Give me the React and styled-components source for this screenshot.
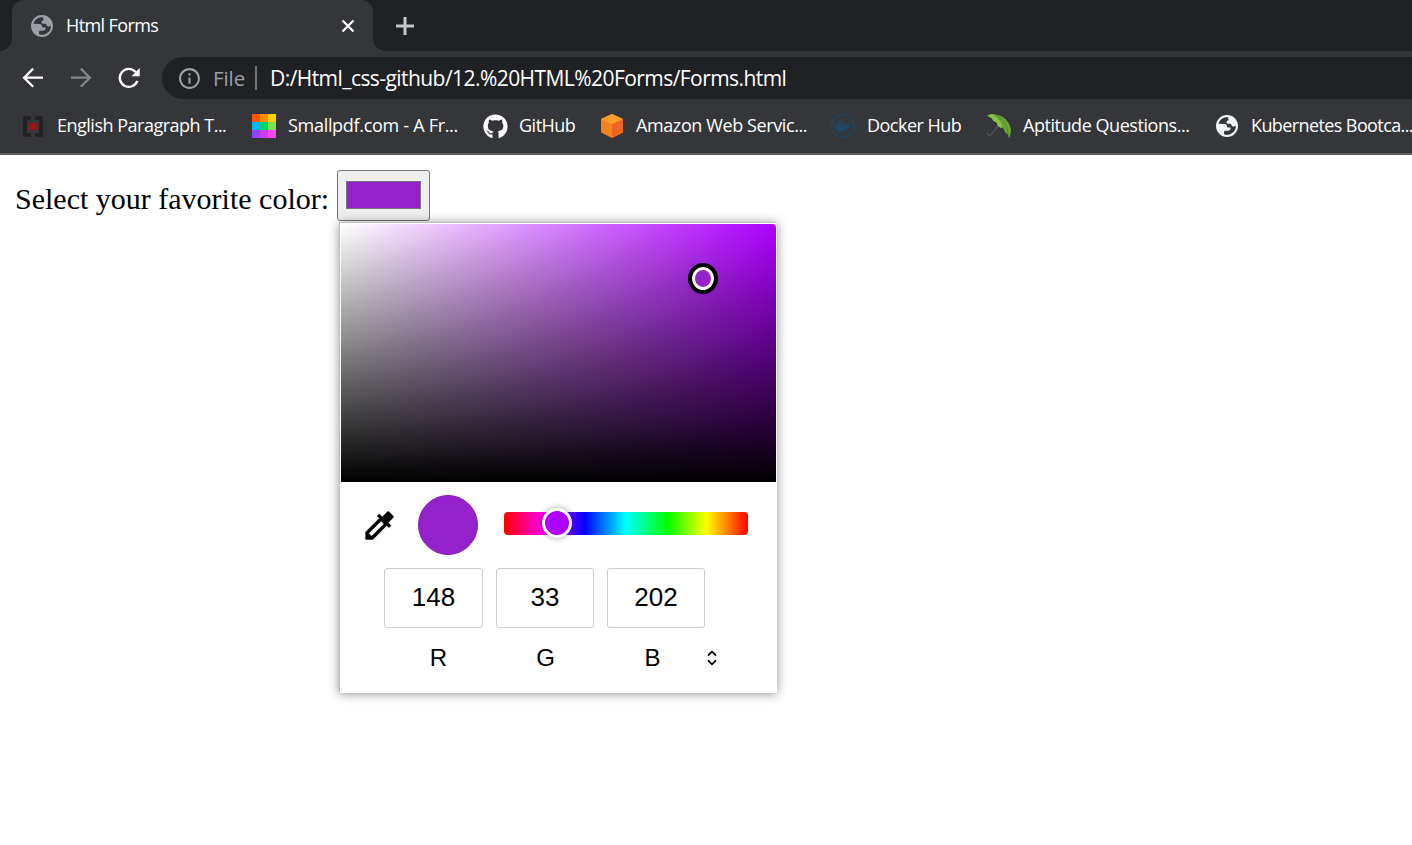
import React from "react";
import styled, { createGlobalStyle } from "styled-components";
import { FaGithub } from "react-icons/fa";
import { MdInfoOutline } from "react-icons/md";

const GlobalStyle = createGlobalStyle`
  *, *::before, *::after { box-sizing: border-box; }
  html, body { margin: 0; padding: 0; overflow: hidden; background: #fff; }
`;

const Browser = styled.div`
  width: 1412px;
  height: 845px;
  display: flex;
  flex-direction: column;
  overflow: hidden;
  background: #fff;
  font-family: "Open Sans", "Noto Sans", sans-serif;
`;

const TabStrip = styled.div`
  height: 51px;
  flex: none;
  display: flex;
  padding-left: 12px;
  background: #202124;
`;

const Tab = styled.div`
  position: relative;
  width: 361px;
  height: 51px;
  display: flex;
  align-items: center;
  padding: 0 15px 0 18px;
  border-radius: 12px 12px 0 0;
  background: #35363a;

  &::before, &::after {
    content: "";
    position: absolute;
    bottom: 0;
    width: 12px;
    height: 12px;
  }
  &::before {
    left: -12px;
    background: radial-gradient(circle at 0 0, #202124 11.5px, #35363a 12px);
  }
  &::after {
    right: -12px;
    background: radial-gradient(circle at 100% 0, #202124 11.5px, #35363a 12px);
  }
`;

const Label = styled.span`
  font-size: ${(p) => p.$size || 18}px;
  line-height: 26px;
  padding-bottom: 1px;
  letter-spacing: ${(p) => p.$spacing || 0}px;
  color: ${(p) => p.$color || "#fff"};
  white-space: nowrap;
`;

const TabTitle = styled(Label)`
  flex: 1;
  margin-left: 12px;
`;

const BookmarkTitle = styled(Label)`
  padding-bottom: 2px;
`;

const NewTab = styled.div`
  display: flex;
  align-items: center;
  margin-left: 22px;
`;

const Toolbar = styled.div`
  height: 54px;
  flex: none;
  display: flex;
  align-items: center;
  padding-left: 19px;
  background: #35363a;
`;

const NavIcon = styled.div`
  width: 28px;
  height: 28px;
  margin-right: 20px;
  display: flex;
  color: ${(p) => (p.$dim ? "#85868a" : "#fff")};
`;

const AddressBar = styled.div`
  flex: 1;
  height: 42px;
  margin-left: -1px;
  display: flex;
  align-items: center;
  padding-left: 15px;
  border-radius: 21px 0 0 21px;
  background: #202124;
  color: #9aa0a6;
`;

const Scheme = styled(Label)`
  margin-left: 11px;
  width: 32px;
`;

const Separator = styled.div`
  width: 2px;
  height: 24px;
  margin: 0 13px 0 10px;
  background: #73757a;
`;

const BookmarkBar = styled.div`
  height: 50px;
  flex: none;
  display: flex;
  padding: 7px 0 0 20px;
  background: #35363a;
  border-bottom: 2px solid #5f6063;
`;

const Bookmark = styled.div`
  width: ${(p) => p.$width}px;
  height: 28px;
  flex: none;
  display: flex;
  align-items: center;
  gap: 11px;
`;

const BookmarkIcon = styled.div`
  width: 26px;
  height: 28px;
  flex: none;
  display: flex;
  align-items: center;
  justify-content: center;
  color: #fff;
`;

const Page = styled.main`
  flex: 1;
  padding: 15px 0 0 15px;
`;

const FormRow = styled.div`
  display: flex;
  align-items: flex-start;
`;

const Question = styled.label`
  width: 322px;
  padding-top: 12px;
  font-family: "Liberation Serif", serif;
  font-size: 30px;
  line-height: 34px;
  white-space: nowrap;
  color: #000;
`;

const ColorField = styled.div`
  position: relative;
`;

const ColorButton = styled.div`
  width: 93px;
  height: 51px;
  padding: 10px 8px 11px;
  border: 1px solid #767676;
  border-radius: 3px;
  background: #efefef;
`;

const Swatch = styled.div`
  width: 75px;
  height: 28px;
  border: 1px solid #777;
  background: #9421ca;
`;

const Popup = styled.div`
  position: absolute;
  left: 2px;
  top: 52px;
  width: 438px;
  height: 471px;
  border: 1px solid #c0c0c0;
  border-right-color: #fff;
  border-bottom-color: #fff;
  background: #fff;
  box-shadow: 0 1px 10px rgba(0, 0, 0, 0.42);
`;

const Spectrum = styled.div`
  position: relative;
  width: 435px;
  height: 258px;
  margin: 1px 0 0 1px;
  border-radius: 0 4px 0 0;
  background: linear-gradient(to top, #000, rgba(0, 0, 0, 0)), linear-gradient(to right, #fff, #ae00ff);
`;

const SpectrumHandle = styled.div`
  position: absolute;
  left: 347px;
  top: 39px;
  width: 30px;
  height: 31px;
  border: 4px solid #000;
  border-radius: 50%;
  background: #9421ca;
  box-shadow: inset 0 0 0 3px #fff;
`;

const Controls = styled.div`
  height: 86px;
  display: flex;
  align-items: center;
  padding-left: 21px;
`;

const Preview = styled.div`
  width: 60px;
  height: 60px;
  margin: 0 26px 0 20px;
  border: 1px solid #7d1fae;
  border-radius: 50%;
  background: #9421ca;
`;

const HueSlider = styled.div`
  position: relative;
  margin-bottom: 3px;
  width: 244px;
  height: 23px;
  border-radius: 4px;
  background: linear-gradient(to right, #f00 0%, #f0f 17%, #00f 33%, #0ff 50%, #0f0 67%, #ff0 83%, #f00 100%);
`;

const HueHandle = styled.div`
  position: absolute;
  left: 38px;
  top: -4px;
  width: 30px;
  height: 30px;
  border: 3px solid #fff;
  border-radius: 50%;
  background: #ae00ff;
  box-shadow: 0 0 6px rgba(0, 0, 0, 0.35);
`;

const Channels = styled.div`
  display: flex;
  gap: 13px;
  padding-left: 44px;
`;

const ChannelValue = styled.div`
  width: ${(p) => p.$width}px;
  height: 60px;
  border: 1px solid #ccc;
  border-radius: 3px;
  font: 26px/56px "Liberation Sans", sans-serif;
  text-align: center;
  color: #000;
`;

const ChannelNames = styled.div`
  display: flex;
  align-items: center;
  height: 60px;
  padding-left: 45px;
`;

const ChannelName = styled.div`
  width: 107px;
  font: 24px/60px "Liberation Sans", sans-serif;
  text-align: center;
  color: #000;
`;

const Globe = ({ color }) => (
  <svg width="24" height="24" viewBox="0 0 24 24">
    <circle cx="12" cy="12" r="11" fill={color} />
    <path
      d="M13 3.2C8.4 2.8 4.6 5.4 3.6 9.8L9.6 9.9C11.3 10.1 12 11 12 12.2C12 13.3 12.8 13.6 13.6 13.6H15.6C16 15.4 15 16.7 13.4 16.7H9.6L8.8 18.6L9.4 20.4C13.9 21.6 18.4 19.3 20.2 15.4C20.8 14 21 12.5 20.8 11.5C20.2 12.5 19.2 12.8 18 12.6C16.4 12.3 16.7 10 15.4 9.7H12.5C11.3 9.3 11 7.8 12 7.1L13.6 6.2Z"
      fill="#35363a"
    />
  </svg>
);

const BackArrow = () => (
  <svg width="28" height="28" viewBox="0 0 28 28" fill="none" stroke="currentColor" strokeWidth="2.3">
    <path d="M24 13.7H5.5M14.2 4.6L5.1 13.7L14.2 22.8" />
  </svg>
);

const ForwardArrow = () => (
  <svg width="28" height="28" viewBox="0 0 28 28" fill="none" stroke="currentColor" strokeWidth="2.3">
    <path d="M4 13.7H22.5M13.8 4.6L22.9 13.7L13.8 22.8" />
  </svg>
);

const ReloadIcon = () => (
  <svg width="28" height="28" viewBox="0 0 28 28">
    <path d="M22.3 16.8A9 9 0 1 1 20.6 8" fill="none" stroke="currentColor" strokeWidth="2.3" />
    <path d="M24.7 4V12.2H16.5Z" fill="currentColor" />
  </svg>
);

const CloseIcon = () => (
  <svg width="20" height="20" viewBox="0 0 20 20">
    <path d="M4.5 4.5L15.5 15.5M15.5 4.5L4.5 15.5" stroke="#fff" strokeWidth="2.2" />
  </svg>
);

const PlusIcon = () => (
  <svg width="20" height="20" viewBox="0 0 20 20">
    <path d="M1 10H19M10 1V19" stroke="#c4c6ca" strokeWidth="3" />
  </svg>
);

const UpDownIcon = () => (
  <svg width="12" height="18" viewBox="0 0 12 18">
    <path d="M2 6.6L6 2.6L10 6.6M2 11.4L6 15.4L10 11.4" fill="none" stroke="#000" strokeWidth="1.7" />
  </svg>
);

const EyedropperIcon = () => (
  <svg width="37" height="37" viewBox="0 0 24 24">
    <path d="M20.71 5.63l-2.34-2.34c-.39-.39-1.02-.39-1.41 0l-3.12 3.12-1.93-1.91-1.41 1.41 1.42 1.42L3 16.25V21h4.75l8.92-8.92 1.42 1.42 1.41-1.41-1.92-1.92 3.12-3.12c.4-.4.4-1.03.01-1.42zM6.92 19L5 17.08l8.06-8.06 1.92 1.92L6.92 19z" fill="#000" stroke="#000" strokeWidth="0.3" />
  </svg>
);

const BracketIcon = () => (
  <svg width="20" height="21" viewBox="0 0 20 21">
    <path d="M8 2H2V19H8M12 2H18V19H12" fill="none" stroke="#232023" strokeWidth="3.6" />
    <rect x="6" y="7" width="8" height="7" fill="#98151e" />
  </svg>
);

const tiles = ["#ff5500", "#ff8c00", "#ffd000", "#00b9ff", "#00d563", "#7be250", "#8f45ff", "#cb3df5", "#ff45f3"];

const TilesIcon = () => (
  <svg width="24" height="24" viewBox="0 0 24 24" shapeRendering="crispEdges">
    {tiles.map((fill, i) => (
      <rect key={fill} x={(i % 3) * 8} y={Math.floor(i / 3) * 8} width="8" height="8" fill={fill} />
    ))}
  </svg>
);

const CubeIcon = () => (
  <svg width="24" height="24" viewBox="0 0 24 24">
    <path d="M12 0L23 5V18.5L12 24L1 18.5V5Z" fill="#f58220" />
    <path d="M12 0L23 5L12 10.5L1 5Z" fill="#fc9c2c" />
    <path d="M12 10.5L23 5V18.5L12 24Z" fill="#ee6422" />
  </svg>
);

const DockerIcon = () => (
  <svg width="24" height="24" viewBox="0 0 24 24" fill="#1e4862">
    <circle cx="12" cy="12" r="11.3" fill="none" stroke="#1e4862" strokeWidth="1.2" />
    <path d="M3.6 12H16C16.4 10.8 16.2 9.6 16.8 8.6C17.8 9.2 18.2 10 18.3 10.8C19.3 10.5 20.4 10.7 21 11.1C20.4 12.4 19.3 12.8 18 12.8C16.5 16.2 13.5 17.8 9.6 17.8C5.6 17.8 3.4 15.8 3.6 12Z" />
    <path d="M4.6 9.4H6.6V11.4H4.6ZM7.2 9.4H9.2V11.4H7.2ZM9.8 9.4H11.8V11.4H9.8ZM12.4 9.4H14.4V11.4H12.4ZM7.2 7H9.2V9H7.2ZM9.8 7H11.8V9H9.8ZM9.8 4.8H11.8V6.6H9.8Z" />
  </svg>
);

const UmbrellaIcon = () => (
  <svg width="26" height="26" viewBox="0 0 26 26">
    <path d="M14 11L5.5 21C3.8 23.2 1 22.4 1.4 19.6" fill="none" stroke="#55585a" strokeWidth="1.1" />
    <path
      d="M1 2.4C3.5.4 8.5.3 14 2.6C20.5 5.6 24.8 11.5 25 18L23.6 25C22.6 24.2 22.2 23 22 21.4C20.6 20.6 19.4 19.8 18.6 18.2C18.3 16.7 17.6 15.2 16.2 14.6C14.3 14.8 12.7 14 11.6 12.8C11.2 10.7 10.8 9.4 9.2 8.6C7.6 8.2 6.6 7 5.8 5.2C4.2 4.6 2.4 3.8 1 2.4Z"
      fill="#6ca534"
    />
    <path d="M6 1.6C10.5 3.2 15 8 16.2 14.6C14.3 14.8 12.7 14 11.6 12.8C11.2 10.7 10.8 9.4 9.2 8.6C7.6 8.2 6.6 7 5.8 5.2L2.8 3C4 2.2 5 1.8 6 1.6Z" fill="#8abf55" />
    <path d="M9 1.8C16 4.2 21.4 11.5 22 21.4" fill="none" stroke="#4a8422" strokeWidth="0.9" />
  </svg>
);

const bookmarks = [
  { title: "English Paragraph T...", width: 231, icon: <BracketIcon />, spacing: -0.5 },
  { title: "Smallpdf.com - A Fr...", width: 231, icon: <TilesIcon />, spacing: -0.3 },
  { title: "GitHub", width: 117, icon: <FaGithub size={25} />, spacing: -0.5 },
  { title: "Amazon Web Servic...", width: 231, icon: <CubeIcon />, spacing: -0.4 },
  { title: "Docker Hub", width: 156, icon: <DockerIcon />, spacing: -0.52 },
  { title: "Aptitude Questions...", width: 228, icon: <UmbrellaIcon />, spacing: -0.45 },
  { title: "Kubernetes Bootca...", width: 198, icon: <Globe color="#f1f3f4" />, spacing: -0.6 },
];

const channels = [
  { name: "R", value: 148, width: 99 },
  { name: "G", value: 33, width: 98 },
  { name: "B", value: 202, width: 98 },
];

export default function App() {
  return (
    <Browser>
      <GlobalStyle />
      <TabStrip>
        <Tab>
          <Globe color="#9aa0a6" />
          <TabTitle $spacing={-0.6}>Html Forms</TabTitle>
          <CloseIcon />
        </Tab>
        <NewTab><PlusIcon /></NewTab>
      </TabStrip>
      <Toolbar>
        <NavIcon><BackArrow /></NavIcon>
        <NavIcon $dim><ForwardArrow /></NavIcon>
        <NavIcon><ReloadIcon /></NavIcon>
        <AddressBar>
          <MdInfoOutline size={25} />
          <Scheme $size={20.5} $spacing={-0.1} $color="#9aa0a6">File</Scheme>
          <Separator />
          <Label $size={21} $spacing={-0.56}>D:/Html_css-github/12.%20HTML%20Forms/Forms.html</Label>
        </AddressBar>
      </Toolbar>
      <BookmarkBar>
        {bookmarks.map((b) => (
          <Bookmark key={b.title} $width={b.width}>
            <BookmarkIcon>{b.icon}</BookmarkIcon>
            <BookmarkTitle $spacing={b.spacing}>{b.title}</BookmarkTitle>
          </Bookmark>
        ))}
      </BookmarkBar>
      <Page>
        <FormRow>
          <Question>Select your favorite color:</Question>
          <ColorField>
            <ColorButton><Swatch /></ColorButton>
            <Popup>
              <Spectrum><SpectrumHandle /></Spectrum>
              <Controls>
                <EyedropperIcon />
                <Preview />
                <HueSlider><HueHandle /></HueSlider>
              </Controls>
              <Channels>
                {channels.map((c) => <ChannelValue key={c.name} $width={c.width}>{c.value}</ChannelValue>)}
              </Channels>
              <ChannelNames>
                {channels.map((c) => <ChannelName key={c.name}>{c.name}</ChannelName>)}
                <UpDownIcon />
              </ChannelNames>
            </Popup>
          </ColorField>
        </FormRow>
      </Page>
    </Browser>
  );
}
